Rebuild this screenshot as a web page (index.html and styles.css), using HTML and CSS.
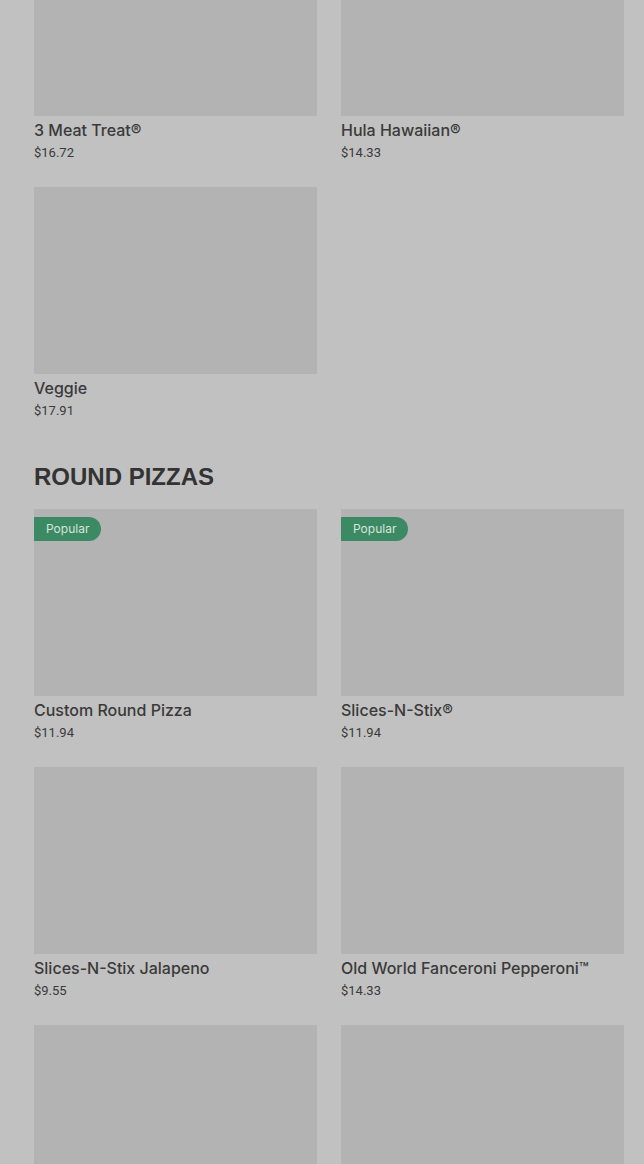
FILE: index.html
```html
<!DOCTYPE html>
<html lang="en">
<head>
<meta charset="utf-8">
<title>Menu</title>
<link rel="stylesheet" href="styles.css">
</head>
<body>
<main class="menu">
  <section class="section first">
    <div class="grid">
      <article class="card"><div class="thumb"></div><h3 class="name">3 Meat Treat®</h3><p class="price">$16.72</p></article>
      <article class="card"><div class="thumb"></div><h3 class="name">Hula Hawaiian®</h3><p class="price">$14.33</p></article>
      <article class="card"><div class="thumb"></div><h3 class="name">Veggie</h3><p class="price">$17.91</p></article>
    </div>
  </section>
  <section class="section">
    <h2 class="heading">ROUND PIZZAS</h2>
    <div class="grid">
      <article class="card"><div class="thumb"><span class="badge">Popular</span></div><h3 class="name">Custom Round Pizza</h3><p class="price">$11.94</p></article>
      <article class="card"><div class="thumb"><span class="badge">Popular</span></div><h3 class="name">Slices-N-Stix®</h3><p class="price">$11.94</p></article>
      <article class="card"><div class="thumb"></div><h3 class="name">Slices-N-Stix Jalapeno</h3><p class="price">$9.55</p></article>
      <article class="card"><div class="thumb"></div><h3 class="name">Old World Fanceroni Pepperoni™</h3><p class="price">$14.33</p></article>
      <article class="card"><div class="thumb"></div><h3 class="name">Pepperoni</h3><p class="price">$11.94</p></article>
      <article class="card"><div class="thumb"></div><h3 class="name">Cheese</h3><p class="price">$9.55</p></article>
    </div>
  </section>
</main>
</body>
</html>
```

FILE: styles.css
```css
html, body {
  margin: 0;
  padding: 0;
  background: #c1c1c1;
  overflow: hidden;
}
body {
  font-family: Inter, Roboto, "Liberation Sans", sans-serif;
  color: #383838;
}
.menu {
  padding: 0 20px 0 34px;
  margin-top: -71px;
}
.grid {
  display: grid;
  grid-template-columns: 283px 283px;
  column-gap: 24px;
  row-gap: 24px;
}
.card {
  margin: 0;
}
.thumb {
  position: relative;
  height: 187px;
  background: #b3b3b3;
}
.badge {
  position: absolute;
  top: 8px;
  left: 0;
  height: 24px;
  line-height: 24px;
  padding: 0 12px;
  font-size: 12px;
  color: #d6e4dc;
  background: #3c8a64;
  border-radius: 0 12px 12px 0;
}
.name {
  margin: 0;
  padding-top: 2px;
  font-size: 16px;
  line-height: 24px;
  font-weight: 500;
  color: #3a3a3a;
}
.price {
  margin: 0;
  font-family: Roboto, "Liberation Sans", sans-serif;
  font-size: 13px;
  line-height: 21px;
  color: #3a3a3a;
}
.heading {
  margin: 42px 0 18px;
  font-family: "Liberation Sans", Arial, sans-serif;
  font-size: 24px;
  line-height: 28px;
  font-weight: 700;
  color: #333333;
}
```
